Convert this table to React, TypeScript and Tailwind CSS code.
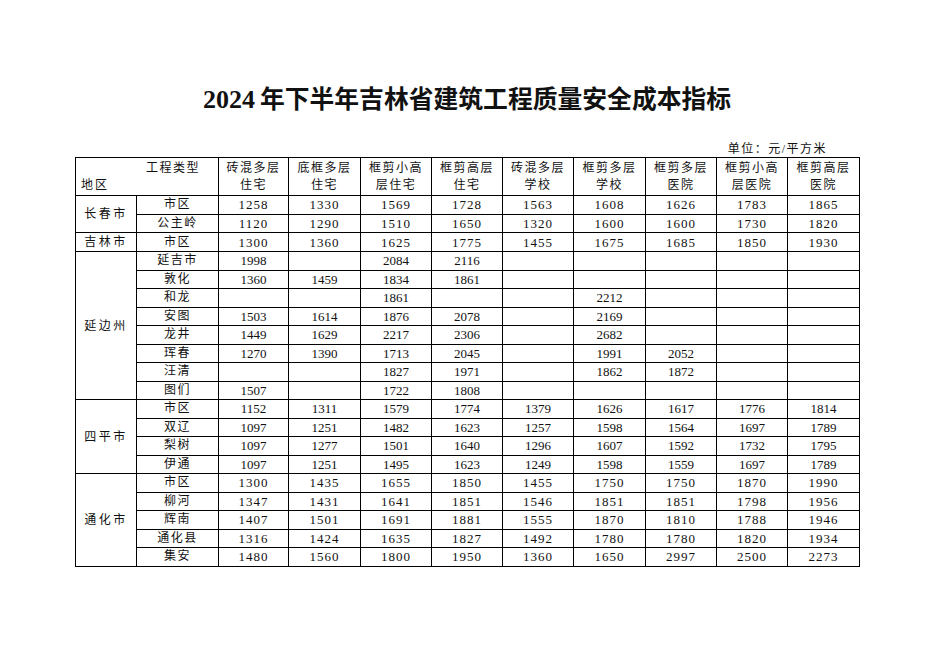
import React from 'react';

type Row = [string, (number | '')[]];
type Group = { region: string; spaced: boolean; items: Row[] };

const headers: [string, string][] = [
  ['砖混多层', '住宅'],
  ['底框多层', '住宅'],
  ['框剪小高', '层住宅'],
  ['框剪高层', '住宅'],
  ['砖混多层', '学校'],
  ['框剪多层', '学校'],
  ['框剪多层', '医院'],
  ['框剪小高', '层医院'],
  ['框剪高层', '医院'],
];

const groups: Group[] = [
  {
    region: '长春市',
    spaced: true,
    items: [
      ['市区', [1258, 1330, 1569, 1728, 1563, 1608, 1626, 1783, 1865]],
      ['公主岭', [1120, 1290, 1510, 1650, 1320, 1600, 1600, 1730, 1820]],
    ],
  },
  {
    region: '吉林市',
    spaced: true,
    items: [['市区', [1300, 1360, 1625, 1775, 1455, 1675, 1685, 1850, 1930]]],
  },
  {
    region: '延边州',
    spaced: false,
    items: [
      ['延吉市', [1998, '', 2084, 2116, '', '', '', '', '']],
      ['敦化', [1360, 1459, 1834, 1861, '', '', '', '', '']],
      ['和龙', ['', '', 1861, '', '', 2212, '', '', '']],
      ['安图', [1503, 1614, 1876, 2078, '', 2169, '', '', '']],
      ['龙井', [1449, 1629, 2217, 2306, '', 2682, '', '', '']],
      ['珲春', [1270, 1390, 1713, 2045, '', 1991, 2052, '', '']],
      ['汪清', ['', '', 1827, 1971, '', 1862, 1872, '', '']],
      ['图们', [1507, '', 1722, 1808, '', '', '', '', '']],
    ],
  },
  {
    region: '四平市',
    spaced: false,
    items: [
      ['市区', [1152, 1311, 1579, 1774, 1379, 1626, 1617, 1776, 1814]],
      ['双辽', [1097, 1251, 1482, 1623, 1257, 1598, 1564, 1697, 1789]],
      ['梨树', [1097, 1277, 1501, 1640, 1296, 1607, 1592, 1732, 1795]],
      ['伊通', [1097, 1251, 1495, 1623, 1249, 1598, 1559, 1697, 1789]],
    ],
  },
  {
    region: '通化市',
    spaced: true,
    items: [
      ['市区', [1300, 1435, 1655, 1850, 1455, 1750, 1750, 1870, 1990]],
      ['柳河', [1347, 1431, 1641, 1851, 1546, 1851, 1851, 1798, 1956]],
      ['辉南', [1407, 1501, 1691, 1881, 1555, 1870, 1810, 1788, 1946]],
      ['通化县', [1316, 1424, 1635, 1827, 1492, 1780, 1780, 1820, 1934]],
      ['集安', [1480, 1560, 1800, 1950, 1360, 1650, 2997, 2500, 2273]],
    ],
  },
];

const colWidths = ['w-[61px]', 'w-[82px]', 'w-[70px]', 'w-[72px]', 'w-[71px]', 'w-[71px]', 'w-[71px]', 'w-[72px]', 'w-[71px]', 'w-[71px]', 'w-[72px]'];

const App: React.FC = () => {
  return (
    <div className="min-h-screen bg-white text-[#111] font-['Liberation_Serif','Noto_Sans_CJK_SC',serif]">
      <div className="pl-[75px] pt-[84px] w-[859px]">
        {/* Title */}
        <h1 className="text-center text-[24.8px] leading-[32px] font-bold">
          <span className="text-[26px] mr-[5px]">2024</span>年下半年吉林省建筑工程质量安全成本指标
        </h1>

        {/* Unit */}
        <div className="mt-[25px] text-right pr-[32px] text-[12px] leading-[16px] tracking-[1.5px]">单位：元/平方米</div>

        {/* Table */}
        <table className="table-fixed border-collapse w-[784px] border border-[#666]">
          <colgroup>
            {colWidths.map((w, i) => (
              <col key={i} className={w} />
            ))}
          </colgroup>
          <thead>
            <tr className="h-[38px]">
              <th colSpan={2} className="border border-black p-0 font-normal text-left align-middle">
                <div className="flex flex-col text-[12px] leading-[17px]">
                  <span className="pl-[70px] tracking-[1.5px]">工程类型</span>
                  <span className="pl-[5px] tracking-[2px]">地区</span>
                </div>
              </th>
              {headers.map(([a, b], i) => (
                <th key={i} className="border border-black p-0 font-normal text-center align-middle">
                  <div className="flex flex-col text-[12px] leading-[17px] tracking-[1.5px]">
                    <span>{a}</span>
                    <span>{b}</span>
                  </div>
                </th>
              ))}
            </tr>
          </thead>
          <tbody>
            {groups.map((g) =>
              g.items.map(([name, vals], ri) => (
                <tr key={g.region + name} className="h-[18.5px]">
                  {ri === 0 && (
                    <td rowSpan={g.items.length} className="border border-black p-0 text-center align-middle text-[12px] tracking-[2.5px]">
                      {g.region}
                    </td>
                  )}
                  <td className="border border-black p-0 text-center align-middle text-[12px] leading-[17px] tracking-[1.5px]">{name}</td>
                  {vals.map((v, ci) => (
                    <td
                      key={ci}
                      className={
                        g.spaced
                          ? 'border border-black p-0 text-center align-middle text-[13px] leading-[17px] tracking-[1px]'
                          : 'border border-black p-0 text-center align-middle text-[13px] leading-[17px]'
                      }
                    >
                      {v}
                    </td>
                  ))}
                </tr>
              ))
            )}
          </tbody>
        </table>
      </div>
    </div>
  );
};

export default App;
